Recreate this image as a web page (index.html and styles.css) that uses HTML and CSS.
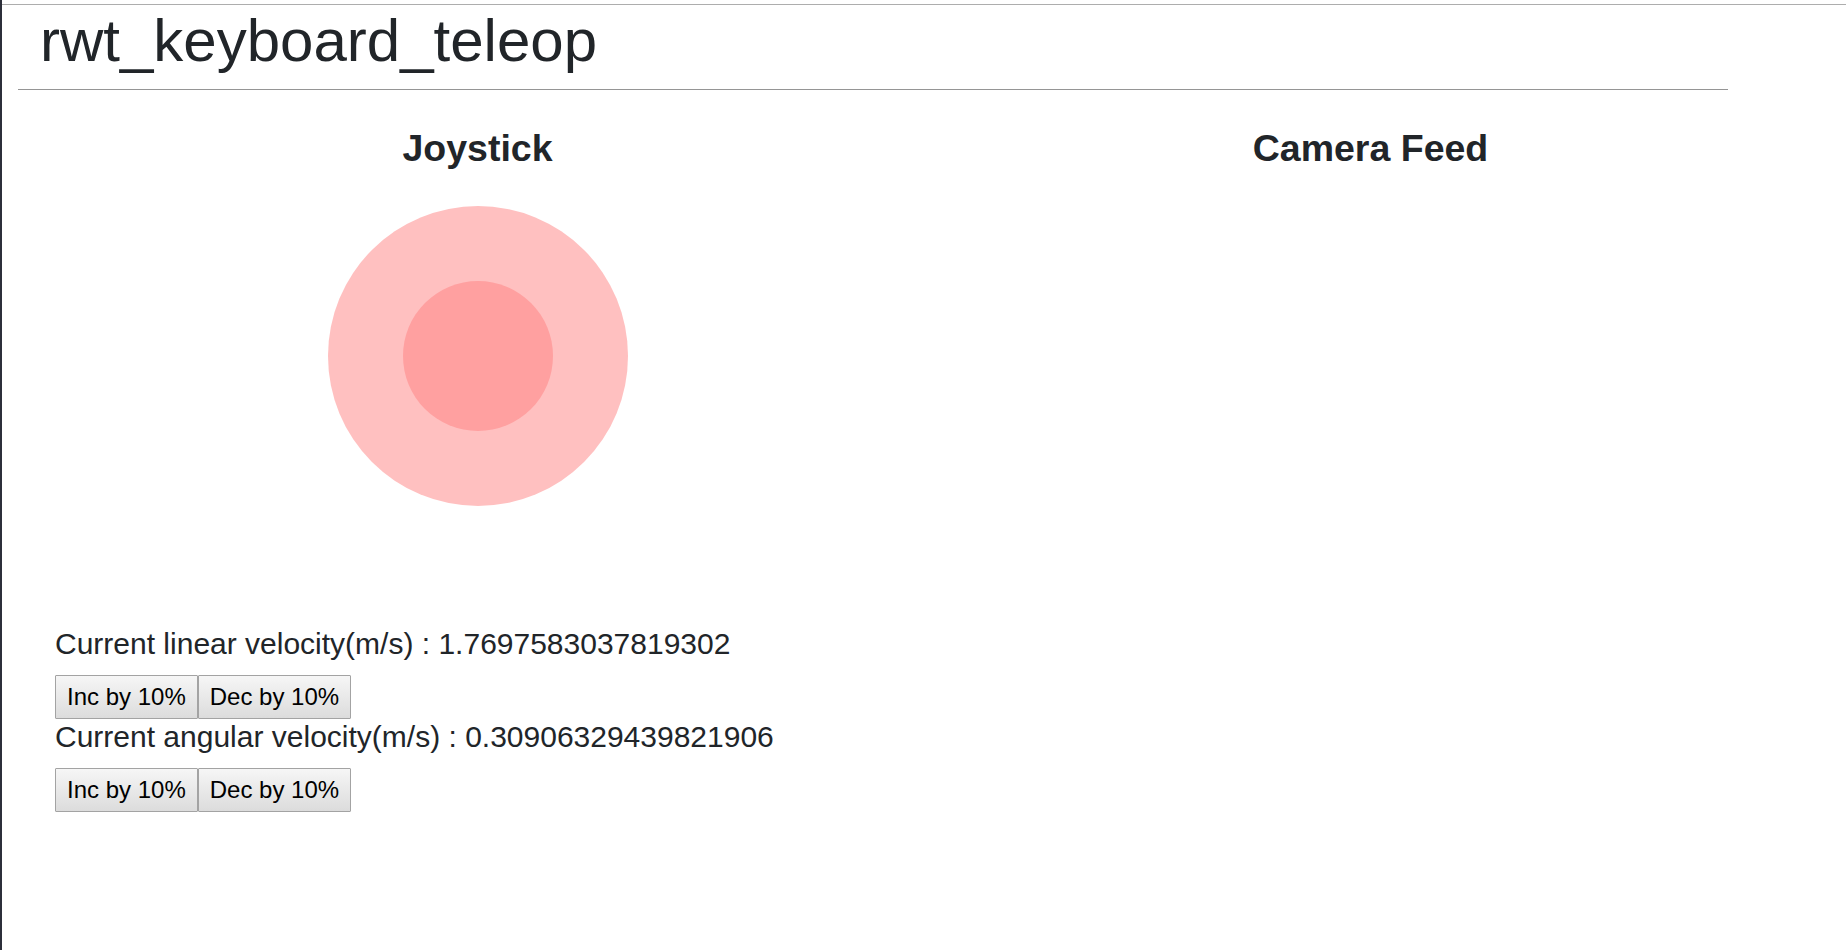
FILE: index.html
```html
<!DOCTYPE html>
<html lang="en">
<head>
<meta charset="utf-8">
<title>rwt_keyboard_teleop</title>
<link rel="stylesheet" href="styles.css">
</head>
<body>
<div class="page">
  <div class="topline"></div>
  <header class="header">
    <h1 class="title">rwt_keyboard_teleop</h1>
    <hr class="rule">
  </header>
  <div class="panels">
    <section class="panel">
      <h2 class="panel-title">Joystick</h2>
      <div class="joystick">
        <div class="joy-outer"><div class="joy-inner"></div></div>
      </div>
    </section>
    <section class="panel">
      <h2 class="panel-title">Camera Feed</h2>
    </section>
  </div>
  <div class="controls">
    <div class="velocity">Current linear velocity(m/s) : 1.7697583037819302</div>
    <div class="btn-row">
      <button class="btn">Inc by 10%</button><button class="btn">Dec by 10%</button>
    </div>
    <div class="velocity">Current angular velocity(m/s) : 0.30906329439821906</div>
    <div class="btn-row">
      <button class="btn">Inc by 10%</button><button class="btn">Dec by 10%</button>
    </div>
  </div>
</div>
</body>
</html>
```
FILE: styles.css
```css
html, body {
  margin: 0;
  padding: 0;
  background: #ffffff;
}
body {
  font-family: "Liberation Sans", Arial, sans-serif;
  color: #212529;
}
.page {
  min-height: 950px;
  border-left: 2px solid #2c2f3a;
  box-sizing: border-box;
  padding-top: 4px;
}
.topline {
  height: 1px;
  background: #adadad;
}
.header {
  margin-left: 16px;
  width: 1710px;
}
.title {
  margin: 0;
  padding-left: 22px;
  font-size: 60px;
  font-weight: 400;
  line-height: 72px;
}
.rule {
  margin: 12px 0 0;
  border: 0;
  height: 1px;
  background: #959595;
}
.panels {
  display: grid;
  grid-template-columns: 893px 893px;
  margin-left: 29px;
  margin-top: 36px;
}
.panel-title {
  margin: 0;
  text-align: center;
  font-size: 37.5px;
  font-weight: 700;
  line-height: 45px;
}
.joystick {
  display: flex;
  justify-content: center;
  margin-top: 35px;
  height: 300px;
}
.joy-outer {
  width: 300px;
  height: 300px;
  border-radius: 50%;
  background: #ffc0c0;
  display: flex;
  align-items: center;
  justify-content: center;
}
.joy-inner {
  width: 150px;
  height: 150px;
  border-radius: 50%;
  background: #ffa0a0;
}
.controls {
  margin-left: 53px;
  margin-top: 120px;
}
.velocity {
  font-size: 30px;
  line-height: 36px;
  margin-bottom: 13px;
}
.btn-row {
  display: flex;
}
.btn {
  font-family: "Liberation Sans", Arial, sans-serif;
  font-size: 24px;
  line-height: 36px;
  height: 44px;
  padding: 3px 11px;
  margin: 0;
  color: #000;
  border: 1px solid #a3a3a3;
  border-radius: 1px;
  background: linear-gradient(#f6f6f6, #dcdcdc);
  box-sizing: border-box;
}
```
